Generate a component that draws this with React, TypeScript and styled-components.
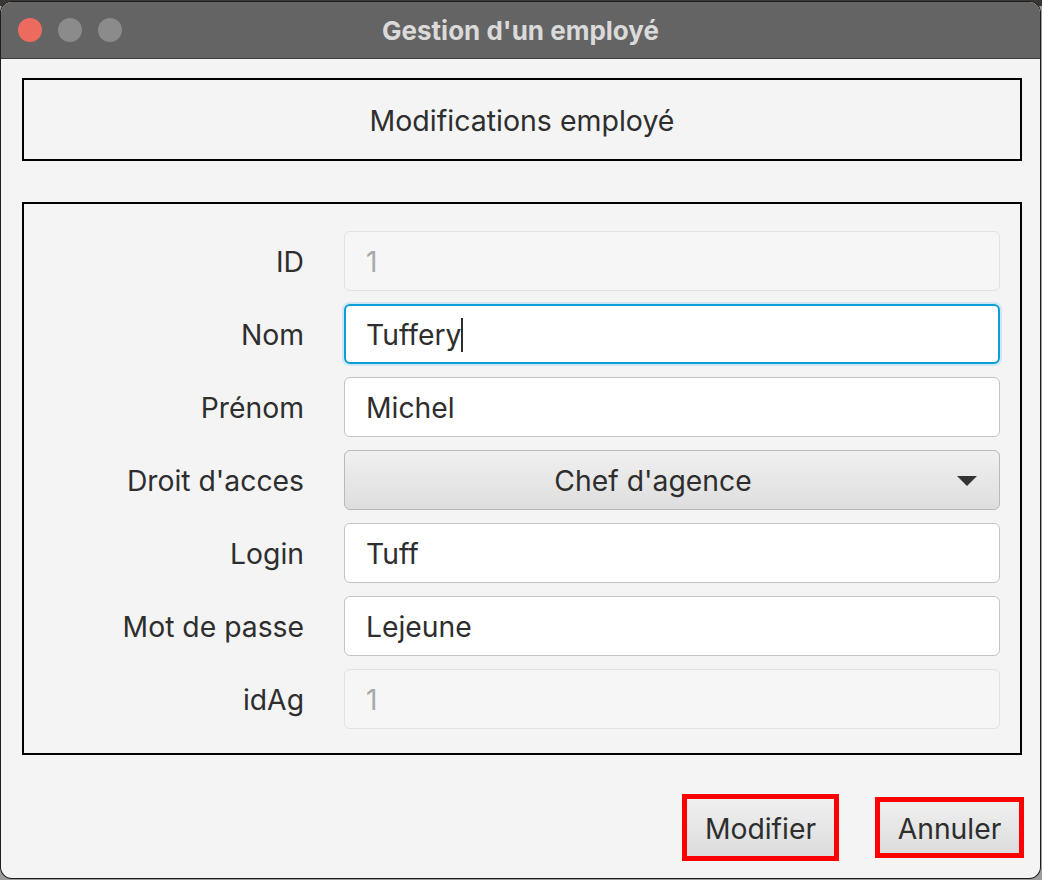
import React from "react";
import styled, { createGlobalStyle } from "styled-components";

const Global = createGlobalStyle`
  html, body { margin: 0; padding: 0; }
  body {
    background: #9d9d9d;
    font-family: Inter, "Noto Sans", "Liberation Sans", sans-serif;
    -webkit-font-smoothing: antialiased;
  }
`;

const Page = styled.div`
  width: 1042px;
  height: 880px;
  padding: 2px 2px 2px 1px;
  box-sizing: border-box;
  background: linear-gradient(#3a3634 0, #3a3634 6px, #9d9d9d 6px);
`;

const Window = styled.div`
  width: 1039px;
  height: 876px;
  border-radius: 11px;
  overflow: hidden;
  background: #f4f4f4;
  box-shadow: 0 0 0 1px #1e1e1e;
  display: flex;
  flex-direction: column;
`;

const TitleBar = styled.div`
  height: 56px;
  flex: none;
  background: #646464;
  border-bottom: 1px solid #3c3c3c;
  display: flex;
  align-items: center;
  position: relative;
`;

const Lights = styled.div`
  display: flex;
  gap: 16px;
  padding-left: 17px;
`;

const Light = styled.span<{ $c: string }>`
  width: 24px;
  height: 24px;
  border-radius: 50%;
  background: ${(p) => p.$c};
`;

const Title = styled.div`
  position: absolute;
  left: 0;
  right: 0;
  text-align: center;
  font-weight: 700;
  font-size: 26px;
  color: #dadada;
`;

const Content = styled.div`
  flex: 1;
  display: flex;
  flex-direction: column;
  padding: 19px 18px 0 21px;
`;

const HeaderBox = styled.div`
  height: 83px;
  box-sizing: border-box;
  border: 2px solid #000;
  display: flex;
  align-items: center;
  justify-content: center;
  font-size: 28.5px;
  color: #2e2e2e;
  padding-top: 2px;
`;

const FormBox = styled.div`
  margin-top: 41px;
  height: 553px;
  box-sizing: border-box;
  border: 2px solid #000;
  padding: 27px 19px 0 0;
  display: grid;
  grid-template-columns: 280px 656px;
  column-gap: 40px;
  row-gap: 13px;
  grid-auto-rows: 60px;
`;

const Label = styled.div`
  display: flex;
  align-items: center;
  justify-content: flex-end;
  font-size: 28.3px;
  color: #2e2e2e;
  padding-top: 2px;
`;

const Field = styled.div<{ $disabled?: boolean; $focused?: boolean }>`
  box-sizing: border-box;
  border-radius: 6px;
  display: flex;
  align-items: center;
  padding-left: 21px;
  padding-top: 2px;
  font-size: 28.3px;
  background: ${(p) => (p.$disabled ? "#f6f6f6" : "#ffffff")};
  color: ${(p) => (p.$disabled ? "#a9a9a9" : "#2e2e2e")};
  border: ${(p) =>
    p.$focused
      ? "2px solid #0c9fd6"
      : p.$disabled
      ? "1px solid #e2e2e2"
      : "1px solid #c4c4c4"};
  box-shadow: ${(p) => (p.$focused ? "0 0 0 2px #cde8f4" : "none")};
  ${(p) => (p.$focused ? "padding-left: 20px;" : "")}
`;

const Caret = styled.span`
  display: inline-block;
  width: 2px;
  height: 34px;
  background: #2e2e2e;
`;

const Combo = styled.div`
  box-sizing: border-box;
  border-radius: 6px;
  border: 1px solid #b9b9b9;
  background: linear-gradient(#f0f0f0, #dedede);
  display: flex;
  align-items: center;
  font-size: 28.3px;
  color: #2e2e2e;
  padding-top: 2px;
`;

const ComboText = styled.div`
  flex: 1;
  text-align: center;
  padding-left: 4px;
`;

const Arrow = styled.svg`
  width: 20px;
  height: 10px;
  margin-right: 22px;
  flex: none;
`;

const Footer = styled.div`
  flex: 1;
  display: flex;
  justify-content: flex-end;
  align-items: center;
  gap: 36px;
  padding-top: 22px;
  margin-right: -2px;
`;

const Button = styled.div<{ $h: number; $w: number; $b: number }>`
  box-sizing: border-box;
  width: ${(p) => p.$w}px;
  height: ${(p) => p.$h}px;
  border: ${(p) => p.$b}px solid #ff0000;
  background: linear-gradient(#f0f0f0, #dcdcdc);
  display: flex;
  align-items: center;
  justify-content: center;
  font-size: 28.3px;
  color: #2e2e2e;
  padding-top: 2px;
`;

const rows: { label: string; value: string; disabled?: boolean; focused?: boolean }[] = [
  { label: "ID", value: "1", disabled: true },
  { label: "Nom", value: "Tuffery", focused: true },
  { label: "Prénom", value: "Michel" },
];
const rows2: { label: string; value: string; disabled?: boolean }[] = [
  { label: "Login", value: "Tuff" },
  { label: "Mot de passe", value: "Lejeune" },
  { label: "idAg", value: "1", disabled: true },
];

export default function App() {
  return (
    <>
      <Global />
      <Page>
        <Window>
          <TitleBar>
            <Lights>
              <Light $c="#ec6a5e" />
              <Light $c="#8b8b8b" />
              <Light $c="#8b8b8b" />
            </Lights>
            <Title>Gestion d'un employé</Title>
          </TitleBar>
          <Content>
            <HeaderBox>Modifications employé</HeaderBox>
            <FormBox>
              {rows.map((r) => (
                <React.Fragment key={r.label}>
                  <Label>{r.label}</Label>
                  <Field $disabled={r.disabled} $focused={r.focused}>
                    {r.value}
                    {r.focused && <Caret />}
                  </Field>
                </React.Fragment>
              ))}
              <Label>Droit d'acces</Label>
              <Combo>
                <ComboText>Chef d'agence</ComboText>
                <Arrow viewBox="0 0 20 10">
                  <polygon points="0,0 20,0 10,10" fill="#333" />
                </Arrow>
              </Combo>
              {rows2.map((r) => (
                <React.Fragment key={r.label}>
                  <Label>{r.label}</Label>
                  <Field $disabled={r.disabled}>{r.value}</Field>
                </React.Fragment>
              ))}
            </FormBox>
            <Footer>
              <Button $w={157} $h={67} $b={5}>Modifier</Button>
              <Button $w={149} $h={61} $b={5}>Annuler</Button>
            </Footer>
          </Content>
        </Window>
      </Page>
    </>
  );
}
